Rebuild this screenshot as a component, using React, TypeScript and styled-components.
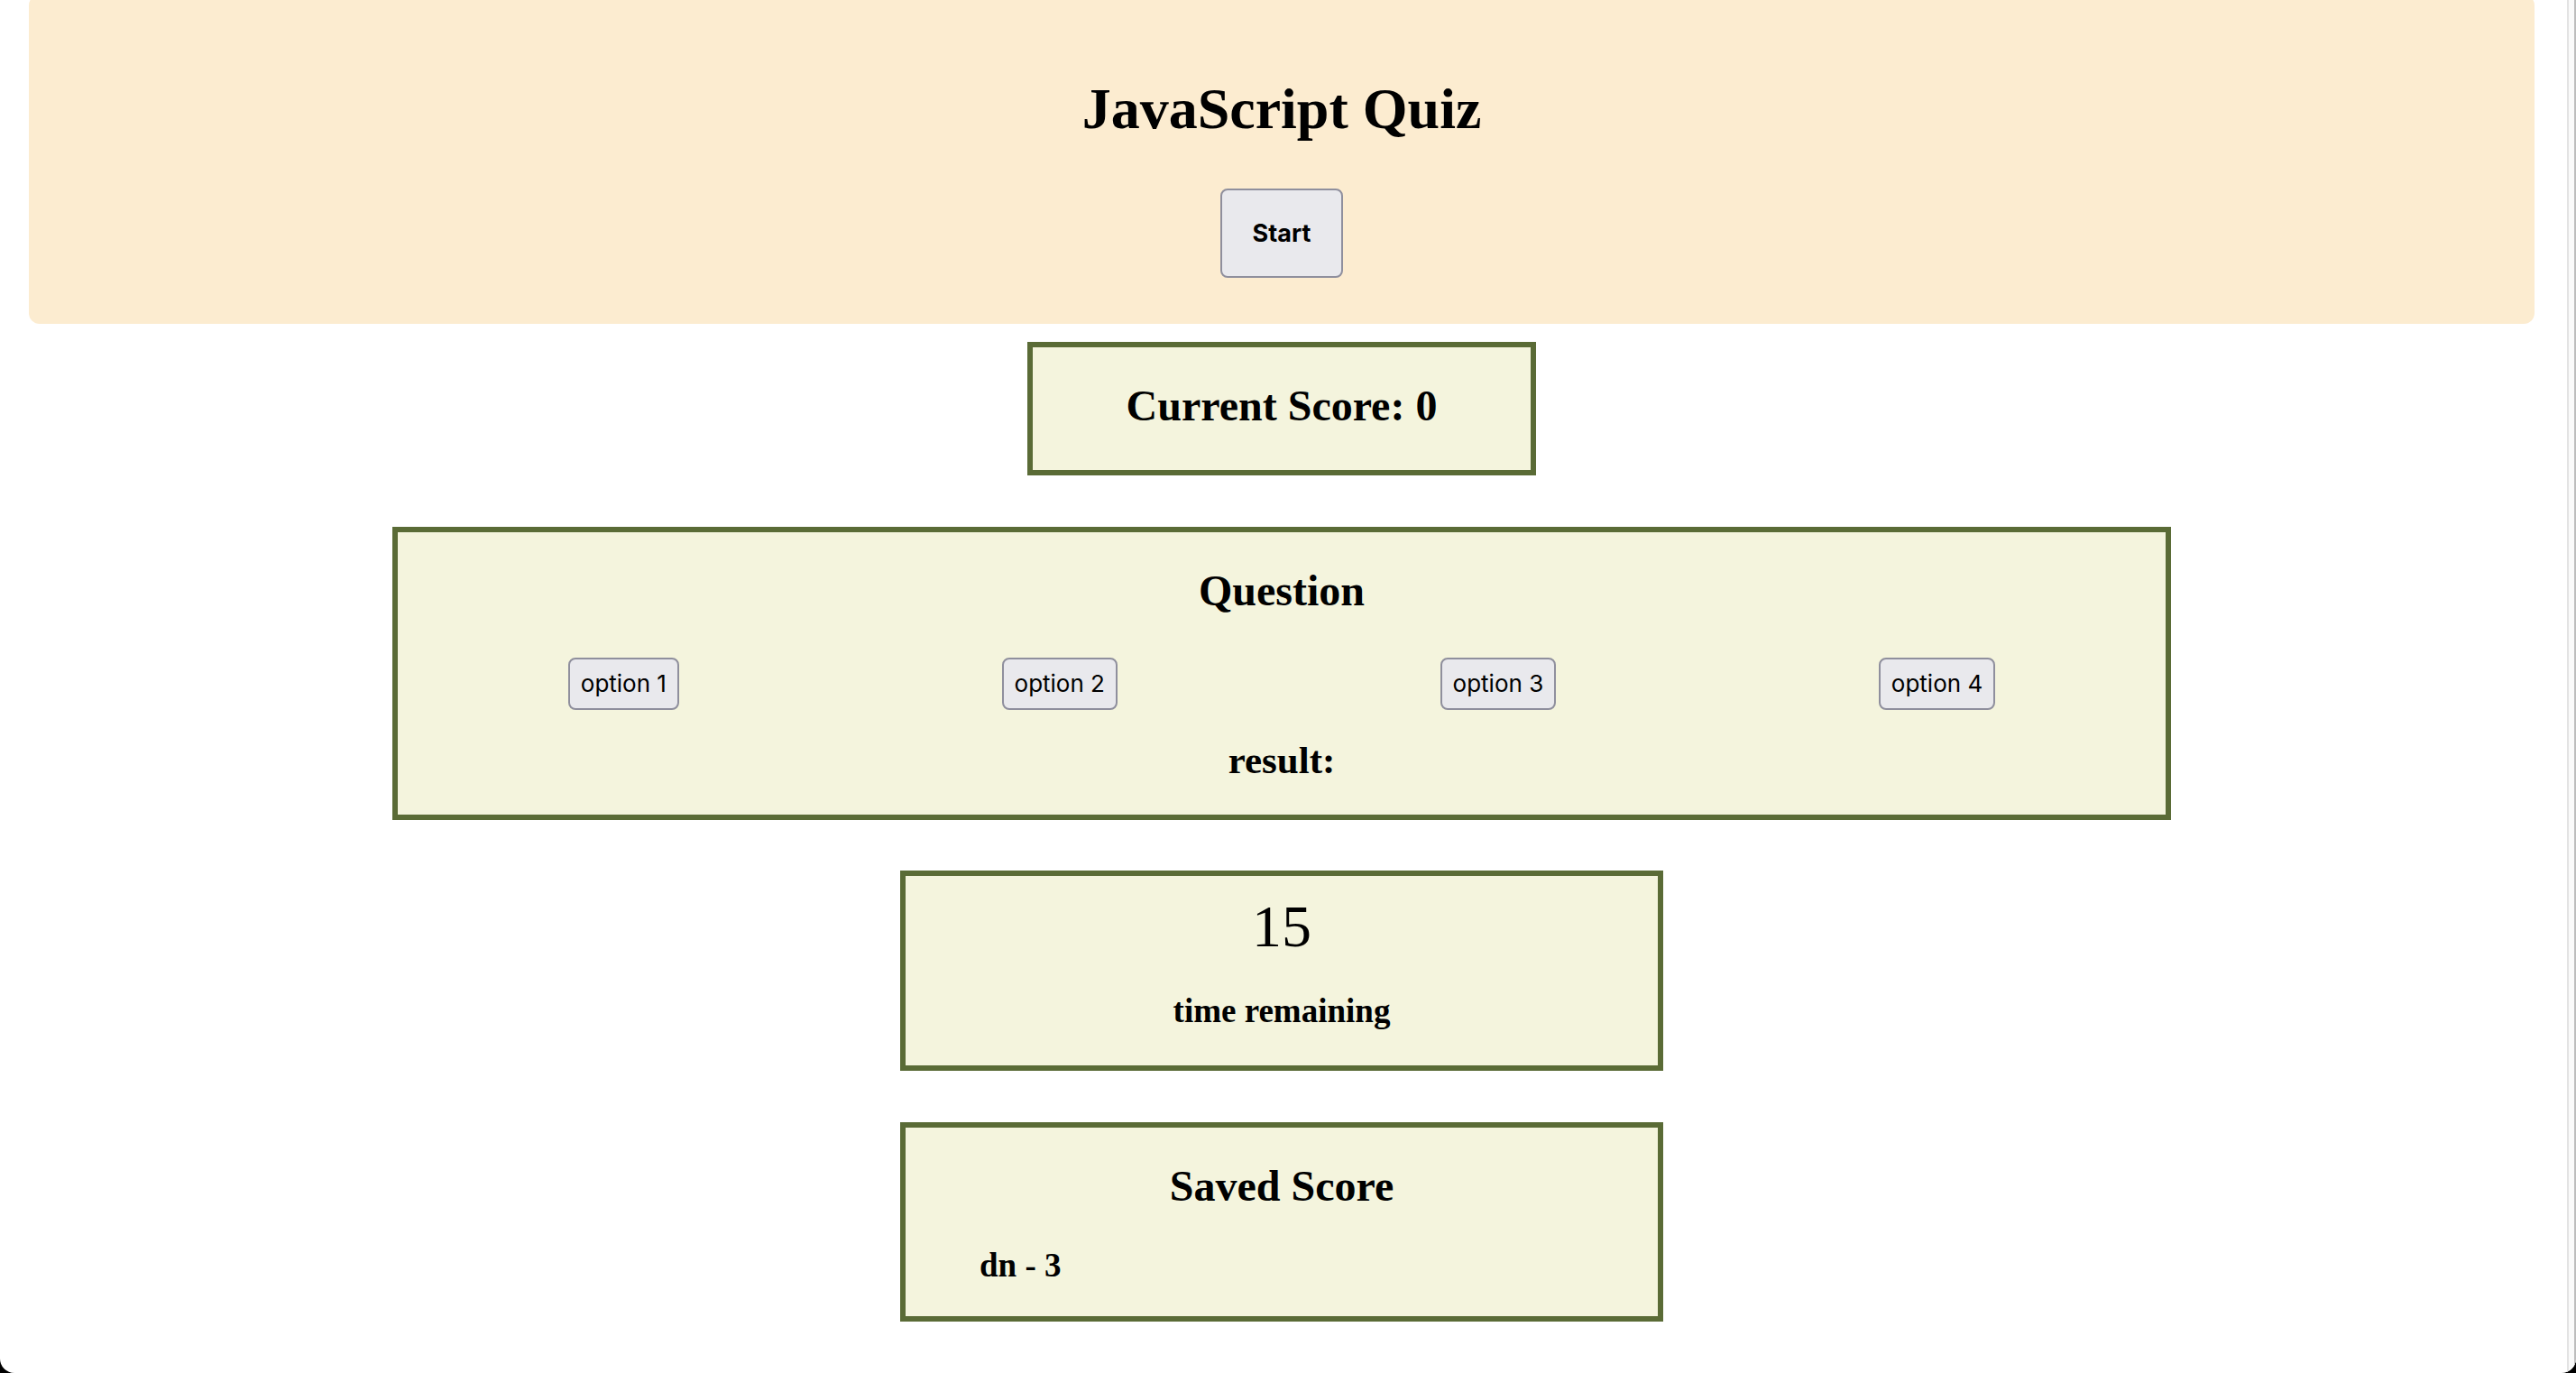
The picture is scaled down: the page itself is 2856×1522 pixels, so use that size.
import React from "react";
import styled, { createGlobalStyle } from "styled-components";

const GlobalStyle = createGlobalStyle`
  html, body {
    margin: 0;
    padding: 0;
    background: #000;
  }
  body {
    font-family: "Liberation Serif", "Times New Roman", serif;
    color: #000;
  }
  * {
    box-sizing: border-box;
  }
`;

const Frame = styled.div`
  display: flex;
  min-height: 100vh;
  background: #fff;
  border-radius: 0 0 16px 16px;
  overflow: hidden;
`;

const Main = styled.main`
  flex: 1;
  display: flex;
  flex-direction: column;
  align-items: center;
  padding: 0 36px 0 32px;
`;

const Gutter = styled.div`
  width: 10px;
  background: #fafafa;
  border-left: 2px solid #e3e3e3;
  border-right: 2px solid #bdbdbd;
`;

const Header = styled.header`
  align-self: stretch;
  margin-top: -6px;
  padding: 90px 0 51px;
  background: #fcecd0;
  border-radius: 12px;
  display: flex;
  flex-direction: column;
  align-items: center;
`;

const Title = styled.h1`
  margin: 0 0 51px;
  font-size: 64px;
  line-height: 74px;
  font-weight: 700;
`;

const StartButton = styled.button`
  font-family: Inter, "Liberation Sans", sans-serif;
  font-weight: 700;
  font-size: 27px;
  line-height: 35px;
  padding: 30px 34px;
  color: #000;
  background: #e9e9ed;
  border: 2px solid #8f8f9d;
  border-radius: 8px;
`;

const Panel = styled.section<{ $width: number; $pad: string; $gap?: number }>`
  width: ${(p) => p.$width}px;
  margin-top: ${(p) => p.$gap ?? 58}px;
  padding: ${(p) => p.$pad};
  background: #f4f4dd;
  border: 6px solid #5a6b36;
  text-align: center;
`;

const Heading = styled.h2`
  margin: 0;
  font-size: 48px;
  line-height: 56px;
  font-weight: 700;
`;

const Options = styled.div`
  display: flex;
  justify-content: space-around;
  margin: 46px 0 32px;
`;

const OptionButton = styled.button`
  font-family: Inter, "Liberation Sans", sans-serif;
  font-size: 26px;
  line-height: 32px;
  padding: 11px 12px;
  color: #000;
  background: #e9e9ed;
  border: 2px solid #8f8f9d;
  border-radius: 8px;
`;

const Result = styled.h3`
  margin: 0;
  font-size: 43px;
  line-height: 48px;
  font-weight: 700;
`;

const Timer = styled.div`
  font-size: 66px;
  line-height: 78px;
  font-weight: 400;
`;

const Caption = styled.h3`
  margin: 33px 0 0;
  font-size: 37px;
  line-height: 43px;
  font-weight: 700;
`;

const SavedEntry = styled.h3`
  margin: 38px 0 0;
  padding-left: 82px;
  text-align: left;
  font-size: 37px;
  line-height: 43px;
  font-weight: 700;
`;

const options = ["option 1", "option 2", "option 3", "option 4"];
const saved = [{ name: "dn", score: 3 }];

const App = () => {
  return (
    <>
      <GlobalStyle />
      <Frame>
        <Main>
          <Header>
            <Title>JavaScript Quiz</Title>
            <StartButton>Start</StartButton>
          </Header>

          <Panel $width={564} $pad="37px 0 43px" $gap={20}>
            <Heading>Current Score: 0</Heading>
          </Panel>

          <Panel $width={1972} $pad="37px 10px 36px" $gap={57}>
            <Heading>Question</Heading>
            <Options>
              {options.map((o) => (
                <OptionButton key={o}>{o}</OptionButton>
              ))}
            </Options>
            <Result>result:</Result>
          </Panel>

          <Panel $width={846} $pad="17px 0 39px" $gap={56}>
            <Timer>15</Timer>
            <Caption>time remaining</Caption>
          </Panel>

          <Panel $width={846} $pad="37px 0 35px" $gap={57}>
            <Heading>Saved Score</Heading>
            {saved.map((s) => (
              <SavedEntry key={s.name}>
                {s.name} - {s.score}
              </SavedEntry>
            ))}
          </Panel>
        </Main>
        <Gutter />
      </Frame>
    </>
  );
};

export default App;
